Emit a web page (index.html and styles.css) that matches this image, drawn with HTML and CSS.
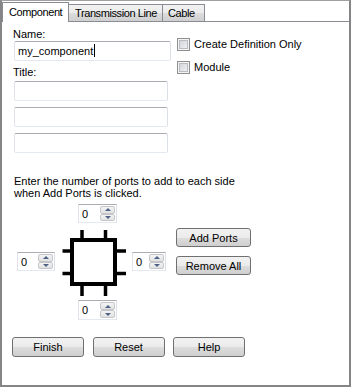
FILE: index.html
```html
<!DOCTYPE html>
<html lang="en">

<head>
    <meta charset="UTF-8">
    <meta name="viewport" content="width=device-width, initial-scale=1.0">
    <title>Component</title>
    <link rel="stylesheet" href="styles.css">
</head>

<body>
    <div class="frame">
        <div class="tabs">
            <div class="tab-fill tab-lead"></div>
            <div class="tab active">Component</div>
            <div class="tab tab-line">Transmission Line</div>
            <div class="tab tab-cable">Cable</div>
            <div class="tab-fill"></div>
        </div>

        <div class="panel">
            <div class="top">
                <div class="fields">
                    <div class="label">Name:</div>
                    <div class="textbox wide">my_component<span class="caret"></span></div>
                    <div class="label title-label">Title:</div>
                    <div class="textbox"></div>
                    <div class="textbox"></div>
                    <div class="textbox"></div>
                </div>
                <div class="options">
                    <div class="check"><span class="box"></span>Create Definition Only</div>
                    <div class="check"><span class="box"></span>Module</div>
                </div>
            </div>

            <p class="hint">Enter the number of ports to add to each side<br>when Add Ports is clicked.</p>

            <div class="ports">
                <div class="spin spin-top">
                    <span class="spin-val">0</span>
                    <span class="spin-btns"><span class="spin-btn"><i class="up"></i></span><span class="spin-btn"><i class="down"></i></span></span>
                </div>

                <div class="spin spin-left">
                    <span class="spin-val">0</span>
                    <span class="spin-btns"><span class="spin-btn"><i class="up"></i></span><span class="spin-btn"><i class="down"></i></span></span>
                </div>

                <svg class="chip" width="64" height="66" viewBox="0 0 64 66">
                    <rect x="10" y="10" width="43" height="44" fill="#fff" stroke="#000" stroke-width="4" />
                    <g stroke="#000" stroke-width="3.5">
                        <line x1="20" y1="0" x2="20" y2="9" />
                        <line x1="43.5" y1="0" x2="43.5" y2="9" />
                        <line x1="20" y1="56" x2="20" y2="66" />
                        <line x1="43.5" y1="56" x2="43.5" y2="66" />
                        <line x1="0.5" y1="21" x2="9" y2="21" />
                        <line x1="0.5" y1="43.5" x2="9" y2="43.5" />
                        <line x1="54" y1="21" x2="64" y2="21" />
                        <line x1="54" y1="43.5" x2="64" y2="43.5" />
                    </g>
                </svg>

                <div class="spin spin-right">
                    <span class="spin-val">0</span>
                    <span class="spin-btns"><span class="spin-btn"><i class="up"></i></span><span class="spin-btn"><i class="down"></i></span></span>
                </div>

                <div class="side-buttons">
                    <button type="button" class="btn side">Add Ports</button>
                    <button type="button" class="btn side">Remove All</button>
                </div>

                <div class="spin spin-bottom">
                    <span class="spin-val">0</span>
                    <span class="spin-btns"><span class="spin-btn"><i class="up"></i></span><span class="spin-btn"><i class="down"></i></span></span>
                </div>
            </div>

            <div class="actions">
                <button type="button" class="btn">Finish</button>
                <button type="button" class="btn">Reset</button>
                <button type="button" class="btn">Help</button>
            </div>
        </div>
    </div>
</body>

</html>
```

FILE: styles.css
```css
body {
    margin: 0;
    background: #fff;
    font-family: "Liberation Sans", Arial, sans-serif;
    font-size: 11px;
    color: #000;
}

.frame {
    width: 351px;
    height: 387px;
    box-sizing: border-box;
    border-top: 1px solid #a0a0a0;
    border-left: 2px solid #858585;
    border-right: 2px solid #858585;
    border-bottom: 2px solid #858585;
    display: flex;
    flex-direction: column;
}

/* tab strip */

.tabs {
    display: flex;
    align-items: flex-end;
    height: 21px;
    flex-shrink: 0;
}

.tab-fill {
    flex: 1;
    align-self: stretch;
    border-bottom: 1px solid #898c95;
}

.tab-lead {
    flex: 0 0 0;
}

.tab {
    box-sizing: border-box;
    height: 18px;
    line-height: 16px;
    padding-left: 5px;
    border: 1px solid #898c95;
    background: linear-gradient(#f2f2f2, #ebebeb 50%, #dddddd 51%, #cfcfcf);
    white-space: nowrap;
    overflow: hidden;
    letter-spacing: -0.4px;
}

.active {
    width: 67px;
    height: 20px;
    line-height: 18px;
    border-bottom: none;
    background: #fff;
    padding-left: 6px;
}

.tab-line {
    width: 94px;
    border-left: none;
    padding-left: 6px;
}

.tab-cable {
    width: 42px;
    border-left: none;
}

/* panel */

.panel {
    flex: 1;
    padding: 6px 0 0 11px;
}

.top {
    display: flex;
    gap: 6px;
}

.fields {
    width: 158px;
    display: flex;
    flex-direction: column;
}

.label {
    line-height: 13px;
}

.title-label {
    margin-top: 5px;
    margin-bottom: 2px;
}

.textbox {
    box-sizing: border-box;
    width: 154px;
    height: 20px;
    margin-left: 1px;
    margin-bottom: 6px;
    border: 1px solid;
    border-color: #abadb3 #dbdfe6 #e3e9ef #e2e3ea;
    border-radius: 2px;
    padding-left: 3px;
    line-height: 18px;
}

.wide {
    width: 157px;
    margin-bottom: 0;
}

.caret {
    display: inline-block;
    width: 1px;
    height: 13px;
    margin-left: 1px;
    vertical-align: -2px;
    background: #000;
}

.options {
    padding-top: 10px;
    display: flex;
    flex-direction: column;
    gap: 10px;
}

.check {
    display: flex;
    align-items: center;
    gap: 4px;
    height: 13px;
    line-height: 13px;
}

.box {
    box-sizing: border-box;
    width: 13px;
    height: 13px;
    border: 1px solid #8e8f8f;
    background: linear-gradient(135deg, #cbcfd5, #f6f6f6);
    box-shadow: inset 0 0 0 1px #f4f4f4, inset 0 0 0 2px #b9bdc3;
}

.hint {
    margin: 16px 0 0 1px;
    line-height: 12px;
}

/* port editor */

.ports {
    display: grid;
    grid-template-columns: 45px 70px 44px 75px;
    grid-template-rows: 26px 70px 20px;
    margin: 5px 0 0 4px;
}

.spin {
    box-sizing: border-box;
    display: flex;
    height: 20px;
    padding: 1px;
    border: 1px solid #abadb3;
    border-color: #abadb3 #dbdfe6 #e3e9ef #e2e3ea;
    background: #fff;
}

.spin-val {
    flex: 1;
    padding-left: 2px;
    line-height: 16px;
}

.spin-btns {
    width: 15px;
    display: flex;
    flex-direction: column;
}

.spin-btn {
    flex: 1;
    display: flex;
    align-items: center;
    justify-content: center;
    border: 1px solid #c4c6ca;
    border-radius: 2px;
    background: linear-gradient(#f4f4f4, #e1e1e1);
}

.up,
.down {
    width: 0;
    height: 0;
    border-left: 3px solid transparent;
    border-right: 3px solid transparent;
}

.up {
    border-bottom: 3px solid #4d6185;
}

.down {
    border-top: 3px solid #4d6185;
}

.spin-top {
    grid-column: 2;
    grid-row: 1;
    width: 39px;
    height: 19px;
    margin-left: 16px;
}

.spin-left {
    grid-column: 1;
    grid-row: 2;
    width: 38px;
    height: 19px;
    margin-top: 22px;
}

.chip {
    grid-column: 2;
    grid-row: 2;
}

.spin-right {
    grid-column: 3;
    grid-row: 2;
    width: 34px;
    height: 19px;
    margin-top: 22px;
}

.spin-bottom {
    grid-column: 2;
    grid-row: 3;
    width: 39px;
    margin-left: 16px;
}

.side-buttons {
    grid-column: 4;
    grid-row: 1 / 3;
    padding-top: 24px;
    display: flex;
    flex-direction: column;
    gap: 9px;
}

/* buttons */

.btn {
    box-sizing: border-box;
    width: 72px;
    height: 20px;
    padding: 0;
    border: 1px solid #707070;
    border-radius: 3px;
    background: linear-gradient(#f2f2f2, #ebebeb 50%, #dddddd 51%, #cfcfcf);
    font-family: "Liberation Sans", Arial, sans-serif;
    font-size: 11px;
    color: #000;
}

.side {
    width: 75px;
    height: 19px;
}

.actions {
    display: flex;
    gap: 8.5px;
    margin: 17px 0 0 -1px;
}
```
